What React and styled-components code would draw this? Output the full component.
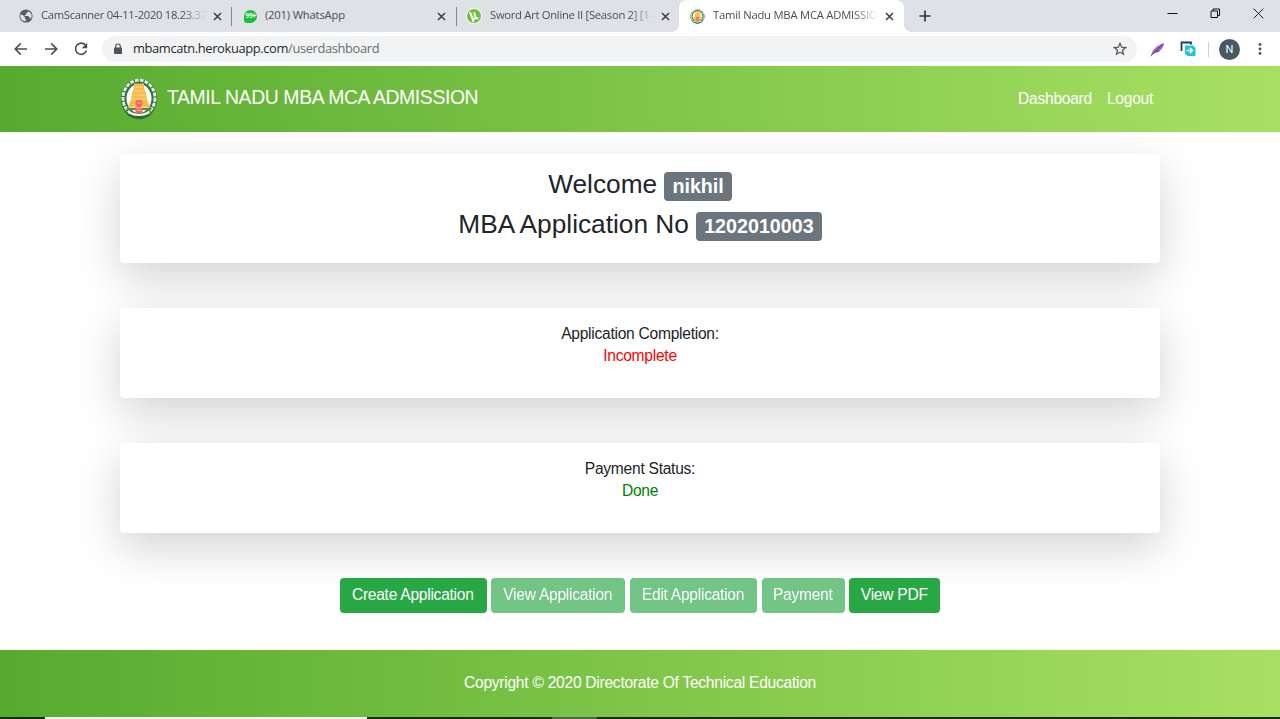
import React from 'react';
import styled, { createGlobalStyle, css } from 'styled-components';

const Global = createGlobalStyle`
  * { box-sizing: border-box; }
  html, body { margin: 0; padding: 0; background: #fff; overflow: hidden; }
  body {
    font-family: "Liberation Sans", Arial, sans-serif;
    font-size: 15.6px;
    letter-spacing: -0.27px;
    color: #212529;
  }
`;

const Screen = styled.div`
  width: 1280px;
  height: 719px;
  display: flex;
  flex-direction: column;
  overflow: hidden;
`;

/* Browser chrome */
const TabStrip = styled.div`
  height: 32px;
  flex: none;
  display: flex;
  background: #dee1e6;
  font: 11.25px/30px "Open Sans", "Noto Sans", sans-serif;
  color: #4b4e52;
`;

const Tab = styled.div`
  width: ${(p) => p.$w}px;
  flex: none;
  height: 32px;
  padding-left: ${(p) => p.$pad}px;
  padding-right: ${(p) => p.$end}px;
  display: flex;
  align-items: center;
  position: relative;
  ${(p) =>
    p.$active &&
    css`
      background: #fff;
      border-radius: 8px 8px 0 0;
      &::before,
      &::after {
        content: '';
        position: absolute;
        bottom: 0;
        width: 7px;
        height: 7px;
      }
      &::before {
        left: -7px;
        background: radial-gradient(circle at 0 0, transparent 6.5px, #fff 7px);
      }
      &::after {
        right: -7px;
        background: radial-gradient(circle at 100% 0, transparent 6.5px, #fff 7px);
      }
    `}
`;

const TabTitle = styled.span`
  flex: 1;
  min-width: 0;
  margin: 0 7px 0 8px;
  padding-bottom: 2px;
  overflow: hidden;
  white-space: nowrap;
  letter-spacing: ${(p) => p.$ls || 0}px;
  ${(p) => p.$fade && css`mask-image: linear-gradient(90deg, #000 calc(100% - 24px), transparent);`}
`;

const Divider = styled.span`
  width: 1px;
  height: ${(p) => p.$h || 19}px;
  flex: none;
  align-self: center;
  background: ${(p) => p.$color || '#85888c'};
`;

const NewTab = styled.div`
  width: 41px;
  display: flex;
  align-items: center;
  justify-content: center;
`;

const WindowControls = styled.div`
  margin-left: auto;
  display: flex;
  align-items: center;
  gap: 32px;
  padding: 0 16px 5px 0;
`;

const Toolbar = styled.div`
  height: 34px;
  flex: none;
  display: flex;
  align-items: center;
  background: #fff;
  padding: 0 10px 0 13px;
`;

const NavButtons = styled.div`
  display: flex;
  align-items: center;
  gap: 14px;
  margin-right: 13px;
`;

const AddressBar = styled.div`
  width: 1035px;
  height: 26px;
  flex: none;
  display: flex;
  align-items: center;
  padding: 0 10px 0 11px;
  border-radius: 13px;
  background: #f1f3f4;
`;

const Url = styled.span`
  flex: 1;
  margin-left: 10px;
  padding-bottom: 1px;
  font: 12.9px/25px "Open Sans", "Noto Sans", sans-serif;
  letter-spacing: -0.37px;
  color: #6a6d71;
  b { font-weight: 400; color: #27292c; }
`;

const Extensions = styled.div`
  flex: 1;
  display: flex;
  align-items: center;
  padding-left: 13px;
  gap: ${(p) => p.$gap}px;
`;

const ExtensionGroup = styled.div`
  display: flex;
  align-items: center;
  gap: ${(p) => p.$gap}px;
`;

const Avatar = styled.span`
  width: 21px;
  height: 21px;
  border-radius: 50%;
  background: #455a64;
  color: #fff;
  font: 11px/21px Roboto, sans-serif;
  letter-spacing: 0;
  text-align: center;
`;

/* Web page */
const greenBand = css`
  background: linear-gradient(to right, #56ab2f, #a8e063);
  color: #fff;
`;

const Navbar = styled.header`
  ${greenBand}
  height: 66px;
  flex: none;
  display: flex;
  align-items: center;
  padding: 0 127px 0 120px;
`;

const Brand = styled.span`
  margin: -5px auto 0 9px;
  font-size: 19.4px;
  line-height: 28px;
  letter-spacing: -0.39px;
`;

const NavLinks = styled.nav`
  display: flex;
  gap: 15px;
  line-height: 22px;
`;

const Main = styled.main`
  flex: 1;
  min-height: 0;
  padding: 22px 120px 0;
  display: flex;
  flex-direction: column;
`;

const Card = styled.section`
  height: ${(p) => p.$h}px;
  flex: none;
  margin-bottom: ${(p) => (p.$last ? 44.5 : 45)}px;
  padding-top: 15px;
  border-radius: 4px;
  background: #fff;
  box-shadow: 0 15px 45px rgba(0, 0, 0, 0.175);
  text-align: center;
  line-height: 22px;
`;

const Heading = styled.h3`
  margin: 0 0 8px;
  font-size: 26.25px;
  line-height: 31.5px;
  font-weight: 400;
  letter-spacing: 0;
`;

const Badge = styled.span`
  display: inline-block;
  padding: 5px 8px 4.5px;
  border-radius: 4px;
  background: #6c757d;
  color: #fff;
  font-size: 19.69px;
  font-weight: 700;
  line-height: 19.5px;
  vertical-align: baseline;
`;

const Status = styled.div`
  color: ${(p) => p.$color};
`;

const Actions = styled.div`
  display: flex;
  justify-content: center;
  gap: 4.5px;
`;

const Button = styled.button`
  width: ${(p) => p.$w}px;
  height: 35.5px;
  padding: 0 1px 1px 0;
  border: 0;
  border-radius: 4px;
  background: #28a745;
  color: #fff;
  font: 15.6px/22px "Liberation Sans", Arial, sans-serif;
  letter-spacing: -0.27px;
  white-space: nowrap;
  opacity: ${(p) => (p.disabled ? 0.65 : 1)};
`;

const Footer = styled.footer`
  ${greenBand}
  height: 67px;
  flex: none;
  text-align: center;
  line-height: 66px;
`;

const Taskbar = styled.div`
  height: 2px;
  flex: none;
  display: flex;
  background: #1a2b14;
`;

const TaskSegment = styled.span`
  width: ${(p) => p.$w}px;
  margin-left: ${(p) => p.$gap}px;
  background: ${(p) => p.$color};
`;

const CloseIcon = () => (
  <svg width="9" height="9" viewBox="0 0 9 9" stroke="#3c4043" strokeWidth="1.5">
    <path d="M1 1l7 7M8 1L1 8" />
  </svg>
);

const GlobeIcon = () => (
  <svg width="14" height="14" viewBox="0 0 14 14">
    <circle cx="7" cy="7" r="6.6" fill="#5a5e62" />
    <path d="M1.600 5.200l2.700 1.300 1.600 1.700v1.400l1 .9v1.800a5.200 5.200 0 0 1-5.300-7.100zM8.800 1.900v1.300L7 4.500v1.400H5.400l.8 1h3l1.500 1.500 1.100 1.300a5.200 5.200 0 0 0-3-7.800z" fill="#dee1e6" />
  </svg>
);

const CountBubble = styled.span`
  width: 13px;
  height: 13px;
  flex: none;
  border-radius: 50% 50% 50% 3px;
  background: #16c03c;
  color: #fff;
  font: 700 7px/13px Roboto, sans-serif;
  text-align: center;
  letter-spacing: -0.5px;
`;

const TorrentIcon = () => (
  <svg width="16" height="16" viewBox="0 0 16 16">
    <circle cx="8" cy="8" r="7.8" fill="#fff" />
    <circle cx="8" cy="8" r="7" fill="#6cc036" />
    <path d="M4 4.2l2.6 6.5c1.6.8 3-.2 2.8-1.8L8 4.4M9.4 9.2c.6 1.5 1.8 1.5 3.1.9M6.4 10l1 4" fill="none" stroke="#fff" strokeWidth="2" />
  </svg>
);

const EmblemSvg = styled.svg`
  flex: none;
`;

const Emblem = ({ w, h }) => (
  <EmblemSvg width={w} height={h} viewBox="0 0 38 42" preserveAspectRatio="none">
    <ellipse cx="19" cy="21" rx="18.2" ry="20.2" fill="#347a3e" />
    <ellipse cx="19" cy="20" rx="16" ry="17.800" fill="none" stroke="#e9f3e5" strokeWidth="2.800" strokeDasharray="3.800 1.200" />
    <ellipse cx="19" cy="20.500" rx="13.200" ry="15.200" fill="#fdfdf6" stroke="#2f7448" strokeWidth="1.400" />
    <path d="M14 5.500h10v5l2 4.500 1 7 3.500 7.500h-23L11 22l1-7 2-4.500z" fill="#f6ba50" />
    <path d="M15 9h8M14 13h10M13 17h12M12 21h14" stroke="#fbd989" strokeWidth="1" />
    <path d="M6.500 30h25v2h-25z" fill="#4b8b4f" />
    <path d="M15.500 23.500l2-1.500h3l2 1.500v3L21 28l1.500 3v3l-2 1.500h-3l-2-1.500v-3l1.500-3-1.500-1.500z" fill="#f2635f" />
    <path d="M17 25h4M16 29.800h6M17 32.500h4" stroke="#ffb4a2" strokeWidth="1" />
    <path d="M5 33.500q14 7.500 28 0l-3.500 4.500q-10 5-21 0z" fill="#2d6c38" />
    <path d="M9 34.500q10 5 20 0" fill="none" stroke="#f6f8f0" strokeWidth="2.200" />
  </EmblemSvg>
);

const iconLine = { fill: 'none', stroke: '#4a4d51', strokeWidth: 1.6 };

export default function App() {
  return (
    <>
      <Global />
      <Screen>
        <TabStrip>
          <Tab $w={231} $pad={19} $end={9}>
            <GlobeIcon />
            <TabTitle $fade $ls={-0.32}>CamScanner 04-11-2020 18.23.37</TabTitle>
            <CloseIcon />
          </Tab>
          <Divider />
          <Tab $w={224} $pad={12} $end={10}>
            <CountBubble>99+</CountBubble>
            <TabTitle $ls={-0.2}>(201) WhatsApp</TabTitle>
            <CloseIcon />
          </Tab>
          <Divider />
          <Tab $w={222} $pad={9} $end={9}>
            <TorrentIcon />
            <TabTitle $fade $ls={-0.29}>Sword Art Online II [Season 2] [1-</TabTitle>
            <CloseIcon />
          </Tab>
          <Tab $w={225} $pad={11} $end={10} $active>
            <Emblem w={15} h={15} />
            <TabTitle $fade $ls={-0.22}>Tamil Nadu MBA MCA ADMISSIO</TabTitle>
            <CloseIcon />
          </Tab>
          <NewTab>
            <svg width="12" height="12" viewBox="0 0 12 12" stroke="#34373a" strokeWidth="1.7">
              <path d="M6 .5v11M.5 6h11" />
            </svg>
          </NewTab>
          <WindowControls>
            <svg width="11" height="11" viewBox="0 0 11 11" stroke="#111" strokeWidth="1">
              <path d="M.5 5.5h10" />
            </svg>
            <svg width="11" height="11" viewBox="0 0 11 11" fill="none" stroke="#111">
              <path d="M1 3h6.5v6.500H1zM3 3V1h6.500v6.500h-2" />
            </svg>
            <svg width="11" height="11" viewBox="0 0 11 11" stroke="#222">
              <path d="M.7.7l9.6 9.6M10.3.7L.7 10.3" />
            </svg>
          </WindowControls>
        </TabStrip>
        <Toolbar>
          <NavButtons>
            <svg width="16" height="16" viewBox="0 0 16 16" {...iconLine}>
              <path d="M14 8H2.4M7.800 2.400L2.200 8l5.600 5.600" />
            </svg>
            <svg width="16" height="16" viewBox="0 0 16 16" {...iconLine}>
              <path d="M2 8h11.600M8.200 2.400L13.800 8l-5.600 5.600" />
            </svg>
            <svg width="16" height="16" viewBox="0 0 16 16" {...iconLine}>
              <path d="M12.400 4A5.600 5.600 0 1 0 13.500 9.500" />
              <path d="M14.200 1.800v5.400H8.800z" fill="#4a4d51" stroke="none" />
            </svg>
          </NavButtons>
          <AddressBar>
            <svg width="10" height="12" viewBox="0 0 10 12">
              <path d="M2.700 5V3.300a2.300 2.300 0 0 1 4.600 0V5" fill="none" stroke="#505357" strokeWidth="1.2" />
              <rect x="1" y="4.500" width="8" height="6.500" rx=".8" fill="#505357" />
            </svg>
            <Url><b>mbamcatn.herokuapp.com</b>/userdashboard</Url>
            <svg width="14" height="14" viewBox="0 0 14 14" fill="none" stroke="#505357" strokeWidth="1.2">
              <path d="M7 1.300l1.600 3.900 4.100.3-3.200 2.700 1 4.100L7 10.100l-3.500 2.200 1-4.100-3.200-2.700 4.100-.3z" />
            </svg>
          </AddressBar>
          <Extensions $gap={12}>
            <ExtensionGroup $gap={15}>
              <svg width="15" height="15" viewBox="0 0 15 15">
                <path d="M1 13.500C2 9 6 3.500 14 1c-.3 4.600-3.500 8.500-10 10.500z" fill="#9764bd" />
                <path d="M.7 14.300L13 2M5 9.800l4.500-.6" stroke="#633493" strokeWidth=".8" />
              </svg>
              <svg width="16" height="16" viewBox="0 0 16 16">
                <path d="M1.500 10V1.500h9.500v2" fill="none" stroke="#16405b" strokeWidth="1.800" />
                <path d="M5 4.500h8l2.500 2.500v8H7.500L5 12.500z" fill="#20c4da" />
                <path d="M6.500 9.500h6M10 7l2.500 2.500L10 12" fill="none" stroke="#fff" strokeWidth="1.500" />
              </svg>
            </ExtensionGroup>
            <ExtensionGroup $gap={10}>
              <Divider $h={15} $color="#cdd0d4" />
              <Avatar>N</Avatar>
            </ExtensionGroup>
            <svg width="16" height="14" viewBox="0 0 16 14" fill="#505357">
              <circle cx="8" cy="2.500" r="1.400" />
              <circle cx="8" cy="7" r="1.400" />
              <circle cx="8" cy="11.500" r="1.400" />
            </svg>
          </Extensions>
        </Toolbar>
        <Navbar>
          <Emblem w={38} h={42} />
          <Brand>TAMIL NADU MBA MCA ADMISSION</Brand>
          <NavLinks>
            <span>Dashboard</span>
            <span>Logout</span>
          </NavLinks>
        </Navbar>
        <Main>
          <Card $h={109}>
            <Heading>Welcome <Badge>nikhil</Badge></Heading>
            <Heading>MBA Application No <Badge>1202010003</Badge></Heading>
          </Card>
          <Card $h={90}>
            <div>Application Completion:</div>
            <Status $color="#f00">Incomplete</Status>
          </Card>
          <Card $h={90} $last>
            <div>Payment Status:</div>
            <Status $color="green">Done</Status>
          </Card>
          <Actions>
            <Button $w={147}>Create Application</Button>
            <Button $w={134} disabled>View Application</Button>
            <Button $w={127.5} disabled>Edit Application</Button>
            <Button $w={83} disabled>Payment</Button>
            <Button $w={91}>View PDF</Button>
          </Actions>
        </Main>
        <Footer>Copyright © 2020 Directorate Of Technical Education</Footer>
        <Taskbar>
          <TaskSegment $w={322} $gap={45} $color="#f4faf0" />
          <TaskSegment $w={45} $gap={185} $color="#53664b" />
        </Taskbar>
      </Screen>
    </>
  );
}
